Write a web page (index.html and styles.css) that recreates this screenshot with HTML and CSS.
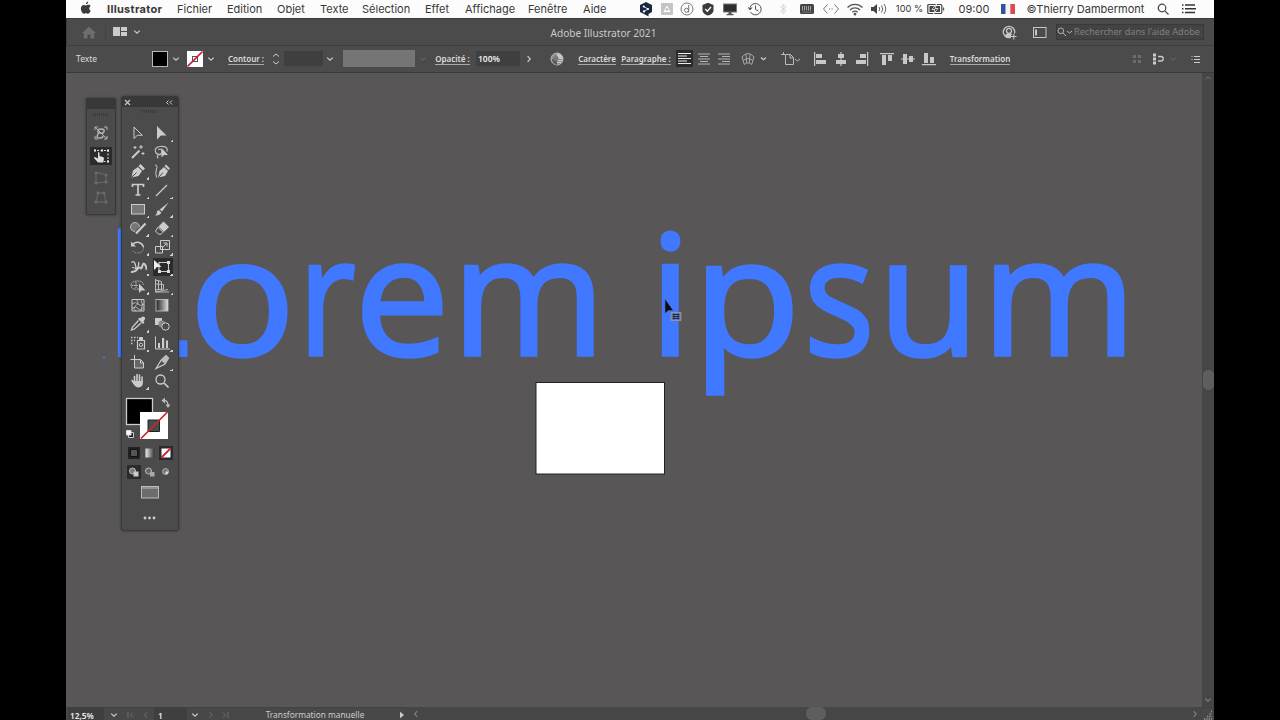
FILE: index.html
```html
<!DOCTYPE html>
<html lang="fr">
<head>
    <meta charset="UTF-8">
    <title>Adobe Illustrator 2021</title>
    <link rel="stylesheet" href="styles.css">
</head>
<body>

<!-- Shared icons -->
<svg class="defs" width="0" height="0">
    <symbol id="chev" viewBox="0 0 8 8"><path d="M1.2 2.6 4 5.2 6.8 2.6" fill="none" stroke="currentColor" stroke-width="1.2"/></symbol>
    <symbol id="right" viewBox="0 0 8 8"><path d="M2.6 1.2 5.2 4 2.6 6.8" fill="none" stroke="currentColor" stroke-width="1.2"/></symbol>
    <symbol id="left" viewBox="0 0 8 8"><path d="M5.2 1.2 2.6 4 5.2 6.8" fill="none" stroke="currentColor" stroke-width="1.2"/></symbol>
</svg>

<div class="screen">

    <!-- macOS menu bar -->
    <header class="menubar">
        <nav class="menus">
            <svg class="apple" width="12" height="14" viewBox="0 0 12 14"><path d="M8.2.6C8.2 2 7.200 3.300 5.900 3.300 5.800 2 7 .8 8.200.6zM10.700 9.700c-.6 1.500-1.600 3-2.700 3-.8 0-1-.5-2-.5s-1.300.5-2 .5C2.500 12.700.9 9.900.9 7.500c0-2.300 1.400-3.600 2.900-3.600.9 0 1.600.6 2.200.6s1.400-.7 2.500-.7c.9 0 1.700.5 2.200 1.200-2 1.200-1.700 4 .0 4.700z" fill="#3a3a3a"/></svg>
            <b>Illustrator</b><span>Fichier</span><span>Edition</span><span>Objet</span><span>Texte</span><span>Sélection</span><span>Effet</span><span>Affichage</span><span>Fenêtre</span><span>Aide</span>
        </nav>
        <div class="tray">
            <svg width="14" height="16" viewBox="0 0 14 16"><path d="M7 1 13 4v7L9.500 13v2.500L6 13.500 1 11V4z" fill="#17293e"/><path d="M4.500 5.500 9 8 5 10.500" stroke="#fff" fill="none" stroke-width=".8"/><circle cx="9" cy="8" r="1.100" fill="#fff"/><circle cx="4.800" cy="5.500" r="1.100" fill="#fff"/><circle cx="5" cy="10.400" r="1.100" fill="#fff"/></svg>
            <svg width="14" height="14" viewBox="0 0 14 14"><rect x="1" y="1" width="12" height="12" rx="1" fill="#c4c4c4"/><path d="M3.500 10 7 3.500l3.500 6.500z" fill="#fff"/><circle cx="7" cy="7.500" r="1.300" fill="#bbb"/></svg>
            <svg width="14" height="14" viewBox="0 0 14 14" fill="none" stroke="#777"><circle cx="7" cy="7" r="6"/><circle cx="6.500" cy="8.300" r="2" /><path d="M8.700 3v7.500"/></svg>
            <svg width="14" height="14" viewBox="0 0 14 14"><path d="M7 .8 12.500 3v5c0 3-2.500 4.600-5.500 5.500C4 12.600 1.500 11 1.500 8V3z" fill="#3b3b3b"/><path d="m4.300 7 2 2.200L10 5" stroke="#fff" fill="none" stroke-width="1.300"/></svg>
            <svg width="16" height="14" viewBox="0 0 16 14"><rect x="1.500" y="2" width="13" height="8" fill="#2e2e2e" stroke="#777"/><path d="M6.500 10h3v2h2v1.200h-7V12h2z" fill="#555"/></svg>
            <svg width="16" height="14" viewBox="0 0 16 14" fill="none" stroke="#555"><path d="M3.200 5A5.700 5.700 0 1 1 3.500 10"/><path d="M8.500 3.500V7.500l3 1.500"/><path d="M.8 5.500h4.800L3 8.500z" fill="#555" stroke="none"/></svg>
            <svg width="10" height="14" viewBox="0 0 10 14" fill="none" stroke="#d4d4d4"><path d="m2 4 6 5-3 3V2l3 3-6 5"/></svg>
            <svg width="16" height="14" viewBox="0 0 16 14"><rect x="1" y="2" width="14" height="10" rx="1.500" fill="#444"/><path d="M3.500 4v4.500M5.500 4v4.500M7.500 4v4.500M9.500 4v4.500M11.500 4v4.500" stroke="#bbb" stroke-width=".8"/><path d="M3 10.200h10" stroke="#888" stroke-width=".7"/></svg>
            <svg width="18" height="14" viewBox="0 0 18 14" fill="none" stroke="#777"><path d="M5.500 2.500 1.500 7l4 4.500M12.500 2.500l4 4.500-4 4.500M7 7h1.200M9.500 7h1.200"/></svg>
            <svg width="18" height="14" viewBox="0 0 18 14" fill="none" stroke="#555" stroke-width="1.300"><path d="M1.500 5.500a10.500 10.500 0 0 1 15 0M4 8a7 7 0 0 1 10 0M6.300 10.300a4 4 0 0 1 5.400 0"/><circle cx="9" cy="12.200" r=".7" fill="#555"/></svg>
            <svg width="18" height="14" viewBox="0 0 18 14" fill="none" stroke="#666"><path d="M1 5h2.500L7 2v10L3.500 9H1z" fill="#444" stroke="none"/><path d="M9 5q1.500 2 0 4M11.500 3.500q2.500 3.500 0 7M14 2q3.500 5 0 10"/></svg>
            <span class="percent">100 %</span>
            <svg width="18" height="14" viewBox="0 0 18 14"><rect x=".8" y="2.500" width="14" height="9" rx="1" fill="none" stroke="#444" stroke-width="1.200"/><rect x="2.500" y="4" width="10.500" height="6" fill="#444"/><path d="M9.500 2 5 7.500h3L6.500 12 11 6.500H8z" fill="#222" stroke="#fff" stroke-width=".8"/><path d="M16.500 5.500v3" stroke="#555" stroke-width="1.300"/></svg>
            <span class="clock">09:00</span>
            <svg width="14" height="10" viewBox="0 0 14 10"><path d="M0 0h4.700v10H0z" fill="#34519d"/><path d="M4.700 0h4.600v10H4.700z" fill="#f3f3f3"/><path d="M9.300 0H14v10H9.300z" fill="#dc4b50"/></svg>
            <span class="user">©Thierry Dambermont</span>
            <svg width="12" height="12" viewBox="0 0 12 12" fill="none" stroke="#444" stroke-width="1.200"><circle cx="5" cy="5" r="3.800"/><path d="m7.800 7.800 3.700 3.700"/></svg>
            <svg width="16" height="12" viewBox="0 0 16 12" stroke="#333" stroke-width="1.400"><path d="M4 2h10M4 5.700h11M4 9.500h10M1 2h1.500M1 5.700h1.500M1 9.500h1.500"/></svg>
        </div>
    </header>

    <!-- Application bar -->
    <div class="appbar">
        <div class="appbar-left">
            <svg width="14" height="13" viewBox="0 0 14 13"><path d="M7 .8 14 7h-1.800v5.500H8.500V8.500h-3v4H1.800V7H0z" fill="#6e6e6e"/></svg>
            <i class="sep"></i>
            <svg class="layout" width="14" height="9" viewBox="0 0 14 9" fill="#ccc"><path d="M0 0h7v9H0zM8 0h6v4H8zM8 5h6v4H8z"/></svg>
            <svg class="chev" width="8" height="8"><use href="#chev"/></svg>
        </div>
        <div class="app-title">Adobe Illustrator 2021</div>
        <div class="appbar-right">
            <svg width="15" height="15" viewBox="0 0 15 15"><circle cx="7" cy="7" r="5.700" fill="none" stroke="#c6c6c6" stroke-width="1.300"/><circle cx="7" cy="5.800" r="2.500" fill="none" stroke="#c6c6c6" stroke-width="1.300"/><path d="M3 11c0-2 2-2 2.500-3h3C9 9 11 9 11 11l-1.500 1.500h-5z" fill="#c6c6c6"/><path d="M9 11.500h6M12 8.500v6" stroke="#4b4b4b" stroke-width="3"/><path d="M9 11.500h5.500M11.800 9v5.500" stroke="#ccc"/></svg>
            <svg width="14" height="11" viewBox="0 0 14 11" fill="none" stroke="#c6c6c6"><rect x=".5" y=".5" width="12.500" height="10"/><path d="M3 2.500v6" stroke-width="2"/></svg>
            <div class="search">
                <svg width="16" height="10" viewBox="0 0 16 10" fill="none" stroke="#b5b5b5"><circle cx="3.800" cy="3.800" r="2.800"/><path d="m6 6 3 3M10 4l2.500 2L15 4"/></svg>
                <span>Rechercher dans l'aide Adobe</span>
            </div>
        </div>
    </div>

    <!-- Control bar -->
    <div class="control">
        <div class="control-grid">
            <span class="sel-type">Texte</span>
            <i class="swatch black"></i>
            <svg class="chev" width="8" height="8"><use href="#chev"/></svg>
            <svg class="no-stroke" width="16" height="16" viewBox="0 0 16 16"><path d="M0 0h16v16H0z" fill="#fff"/><rect x="5.500" y="5.500" width="5" height="5" fill="none" stroke="#555"/><path d="M.5 15.500 15.500.5" stroke="#d0213a" stroke-width="1.600"/></svg>
            <svg class="chev" width="8" height="8"><use href="#chev"/></svg>
            <a>Contour :</a>
            <svg width="8" height="14" viewBox="0 0 8 14" fill="none" stroke="#ccc"><path d="M1 4.500 4 2l3 2.500M1 9.500 4 12l3-2.500"/></svg>
            <i class="field stroke-w"></i>
            <svg class="chev" width="8" height="8"><use href="#chev"/></svg>
            <i class="profile"></i>
            <svg class="dim" width="8" height="8"><use href="#chev"/></svg>
            <a>Opacité :</a>
            <i class="field opacity">100%</i>
            <svg class="chev" width="8" height="8"><use href="#right"/></svg>
            <svg width="14" height="14" viewBox="0 0 14 14"><circle cx="7" cy="7" r="6" fill="#8f8f8f" stroke="#b8b8b8"/><path d="M7 1a6 6 0 0 1 6 6H7z" fill="#c6c6c6"/><path d="M2 7h5v6a6 6 0 0 1-5-6z" fill="#5c5c5c"/><path d="M7 8.500h5.500M7 10.500h4.500" stroke="#ccc" stroke-width=".9"/><circle cx="6" cy="6.500" r="2.500" fill="#777"/></svg>
            <a>Caractère</a>
            <a>Paragraphe :</a>
            <svg class="on" width="17" height="17" viewBox="0 0 17 17" stroke="#eee" stroke-width="1"><path d="M2 3.500h13M2 6h9M2 8.500h13M2 11h9M2 13.500h13"/></svg>
            <svg width="14" height="14" viewBox="0 0 14 14" stroke="#b5b5b5"><path d="M1 2h12M3 4.500h8M1 7h12M3 9.500h8M1 12h12"/></svg>
            <svg width="14" height="14" viewBox="0 0 14 14" stroke="#b5b5b5"><path d="M1 2h12M5 4.500h8M1 7h12M5 9.500h8M1 12h12"/></svg>
            <svg width="28" height="14" viewBox="0 0 28 14" fill="none" stroke="#aaa"><path d="M1 5q6-7 12 0l-2.300 7.500L8.500 11h-3l-2.200 1.500zM5 2.200 5.700 11M9 2.200 8.300 11M2.300 8q4.700-3 9.400 0"/><path d="m20 5.500 2.500 2.300L25 5.500" stroke="#ccc" stroke-width="1.200"/></svg>
            <svg width="20" height="14" viewBox="0 0 20 14" fill="none" stroke="#bbb"><path d="M4.500 12.500v-10h5l3 3v7zM0 2.500h4M2.500 0v3M9 2.500V6h3.500"/><path d="m14 7 2.300 2L19 7"/></svg>
            <svg width="14" height="14" viewBox="0 0 14 14" fill="#c8c8c8"><path d="M1 0h1.200v14H1zM3 2h6v4H3zM3 8h10v4H3z"/></svg>
            <svg width="14" height="14" viewBox="0 0 14 14" fill="#c8c8c8"><path d="M6.400 0h1.200v14H6.400zM4 2h6v4H4zM2 8h10v4H2z"/></svg>
            <svg width="14" height="14" viewBox="0 0 14 14" fill="#c8c8c8"><path d="M12 0h1.200v14H12zM5 2h6v4H5zM1 8h10v4H1z"/></svg>
            <svg width="14" height="14" viewBox="0 0 14 14" fill="#c8c8c8"><path d="M0 1h14v1.200H0zM2 3h4v10H2zM8 3h4v6H8z"/></svg>
            <svg width="14" height="14" viewBox="0 0 14 14" fill="#c8c8c8"><path d="M0 6.400h14v1.200H0zM2 2h4v10H2zM8 4h4v6H8z"/></svg>
            <svg width="14" height="14" viewBox="0 0 14 14" fill="#c8c8c8"><path d="M0 12h14v1.200H0zM2 1h4v10H2zM8 5h4v6H8z"/></svg>
            <a>Transformation</a>
        </div>
        <div class="control-end">
            <svg width="14" height="14" viewBox="0 0 14 14" fill="#6c6c6c"><path d="M3 3h3v3H3zM8 3h3v3H8zM3 8h3v3H3zM8 8h3v3H8z"/></svg>
            <svg width="14" height="14" viewBox="0 0 14 14"><path d="M2 1.500h3v3H2zM2 5.500h3v3H2zM2 9.500h3v3H2z" fill="#ccc"/><path d="M7 4.500h3a2.200 2.200 0 0 1 0 4.500H7" fill="none" stroke="#ccc" stroke-width="1.300"/></svg>
            <svg class="dim" width="8" height="8"><use href="#chev"/></svg>
            <svg width="10" height="10" viewBox="0 0 10 10" stroke="#ccc"><path d="M3 2.500h6M3 5.500h6M3 8.500h6M.5 2.500h1M.5 5.500h1"/></svg>
        </div>
    </div>

    <!-- Document -->
    <main class="workspace">
        <svg class="art" width="1136" height="634" viewBox="66 73 1136 634">
            <g class="lorem">
                <text transform="translate(103.500 355.300) scale(1 1.050)">L</text>
                <text transform="translate(189.600 355.300) scale(1.065 1)">o</text>
                <text transform="translate(298.300 355.300) scale(.850 1)">r</text>
                <text transform="translate(354.500 355.300) scale(1.025 1)">e</text>
                <text transform="translate(451.800 355.300) scale(1.005 1)">m</text>
                <text transform="translate(649.600 355.300) scale(1 1.015)">i</text>
                <text transform="translate(693 355.300) scale(1.065 .990)">p</text>
                <text transform="translate(804 355.300) scale(.895 1)">s</text>
                <text transform="translate(878 355.300)">u</text>
                <text transform="translate(981.800 355.300) scale(1.010 1)">m</text>
            </g>
            <circle cx="104" cy="357.500" r="1.300" fill="#4a6fd0"/>
            <rect x="536" y="382.500" width="128.500" height="91.500" fill="#fff" stroke="#222" stroke-width="1"/>
            <path d="M665 299v14.500l3.300-3h5z" fill="#0a0a18" stroke="#5c6ca0" stroke-width=".6"/>
            <path d="M671 312.500h10v8h-10z" fill="#6f82b4" stroke="#9a9a9a" stroke-width=".8"/>
            <path d="M672.500 314.500h7M672.500 318.500h7M674 313.500v6M678 313.500v6M672.500 316.500h7" stroke="#10183a" stroke-width=".8"/>
        </svg>
        <div class="vscroll">
            <svg width="8" height="8" viewBox="0 0 8 8"><path d="M1.500 5 4 2.800 6.500 5" fill="none" stroke="#777"/></svg>
            <i class="thumb"></i>
            <svg class="grey" width="8" height="8"><use href="#chev"/></svg>
        </div>

        <!-- Free transform widget -->
        <div class="widget">
            <div class="widget-head"></div>
            <div class="grip"></div>
            <svg width="22" height="18" viewBox="0 0 22 18" fill="none" stroke="#b5b5b5"><path d="M5 6V3h3M14 3h3v3M17 12v3h-3M8 15H5v-3M5 3l12 12"/><path d="M8 8.500q-1-3.500 3-3.500t3 2.500-3 1.500-3 1-1 3 3 1 3-2" stroke-width="1.400"/></svg>
            <svg class="on" width="22" height="18" viewBox="0 0 22 18"><path d="M7 3.500h11v11h-6" fill="none" stroke="#ddd" stroke-dasharray="2 1.500"/><path d="M4 2.500h2v2H4zM11 2.500h2v2h-2zM17 2.500h2v2h-2zM17 13.500h2v2h-2z" fill="#eee"/><path d="M8 5.500q1-1 1.500.5v3l4 1.300q1 1-.5 5.200H8L4 11q0-1.500 2-.5l2 1z" fill="#ddd"/></svg>
            <svg width="22" height="20" viewBox="0 0 22 20" fill="none" stroke="#6b6b6b"><path d="M6 5h4l6 2v7l-10 1z"/><path d="M5 4h2v2H5zM15 6h2v2h-2zM15 13h2v2h-2zM5 14h2v2H5z" fill="#6b6b6b"/></svg>
            <svg width="22" height="20" viewBox="0 0 22 20" fill="none" stroke="#6b6b6b"><path d="M8 5h6l2 9H6z"/><path d="M7 4h2v2H7zM13 4h2v2h-2zM15 13h2v2h-2zM5 13h2v2H5z" fill="#6b6b6b"/></svg>
        </div>

        <!-- Tools panel -->
        <div class="tools">
            <div class="tools-head">
                <svg width="7" height="7" viewBox="0 0 7 7"><path d="m1 1 5 5M6 1 1 6" stroke="#ccc" stroke-width="1.100"/></svg>
                <svg width="8" height="7" viewBox="0 0 8 7"><path d="M3.500 1.500 1.500 3.500l2 2M7 1.500 5 3.500l2 2" fill="none" stroke="#ccc"/></svg>
            </div>
            <div class="grip"></div>
            <div class="tool-grid">
                <svg viewBox="0 0 18 18"><path d="M5 3v11.500l3.300-3.200h5z" fill="none" stroke="#ccc"/></svg>
                <svg class="more" viewBox="0 0 18 18"><path d="M4 2v13.500l4-4h5.500z" fill="#ccc"/></svg>
                <svg viewBox="0 0 18 18"><path d="m3 15 7.500-7.500" stroke="#ccc" stroke-width="2"/><path d="M12 2v4M10 4h4M6 3v3M4.500 4.500h3M14 9v3M12.500 10.500h3" stroke="#ccc"/></svg>
                <svg viewBox="0 0 18 18"><path d="M8 11.500C1 12 0 4 7 3.500s8 2 7 5M5 6.500q4-1 4 2t-4 3q-1 2 0 4" fill="none" stroke="#bbb" stroke-width="1.200"/><path d="M8.500 5v9.500l2.500-2.500h4z" fill="#ccc"/></svg>
                <svg class="more" viewBox="0 0 18 18"><path d="M2.500 15.500 4 8.500 9 5l4 4-3.500 5z" fill="#ccc"/><path d="m9.500 4 2-2L16 6.500l-2 2z" fill="#ccc"/><path d="m3 15 4.500-4.500" stroke="#4b4b4b"/></svg>
                <svg viewBox="0 0 18 18"><path d="M5 15.500 6.500 9l4.500-4 4 4-3 5z" fill="#ccc"/><path d="m11.500 4 1.500-1.500L17 6.500 15.500 8z" fill="#ccc"/><path d="m6 15 4-4.500" stroke="#4b4b4b"/><path d="M2 3q3 0 1.500 4t0 8.500" fill="none" stroke="#ccc"/></svg>
                <svg class="more" viewBox="0 0 18 18"><path d="M3.500 6V3.500h11V6M9 3.500V14M6.500 14h5" fill="none" stroke="#ccc" stroke-width="1.700"/></svg>
                <svg class="more" viewBox="0 0 18 18"><path d="M3 15 14 4" stroke="#ccc" stroke-width="1.200"/></svg>
                <svg class="more" viewBox="0 0 18 18"><rect x="2.500" y="4.500" width="13" height="9.500" fill="#777" stroke="#ccc"/></svg>
                <svg class="more" viewBox="0 0 18 18"><path d="M15.500 2.500 9 11.500 6.800 9.500z" fill="#ccc"/><path d="M6 10.300 8.300 12.500Q7 16 2 15.500 4 14 4 12t2-1.700z" fill="#ccc"/></svg>
                <svg class="more" viewBox="0 0 18 18"><circle cx="6" cy="8" r="4.500" fill="#777" stroke="#bbb"/><path d="m7 14.500 9.500-10" stroke="#4b4b4b" stroke-width="4"/><path d="m7 14.500 9.500-10" stroke="#ccc" stroke-width="2.200"/></svg>
                <svg class="more" viewBox="0 0 18 18"><path d="M10.500 2.500 16 8l-5 5-5.500-5.500z" fill="#ccc"/><path d="m5 8.200 5 5-2 2H5.500l-3-3z" fill="none" stroke="#ccc"/></svg>
                <svg class="more" viewBox="0 0 18 18"><path d="M3.500 6.500q3-3 6.500-2t4.500 4.500" fill="none" stroke="#ccc" stroke-width="1.500"/><path d="M14.500 9q0 6-6 6-3.500 0-5-3" fill="none" stroke="#aaa" stroke-dasharray="1.200 1"/><path d="M2 3.500v5h5z" fill="#ccc"/></svg>
                <svg class="more" viewBox="0 0 18 18" fill="none" stroke="#ccc"><path d="M7.500 2.500h9v9h-9zM2.500 8.500h7v6.500h-7z"/><path d="m9 10 4.500-4.500M10.500 5h3.500v3.500"/></svg>
                <svg class="more" viewBox="0 0 18 18" fill="none" stroke="#ccc"><path d="M2.500 4.500q2.500-2 3.500 1t1 5.500M9.500 4q1 4-2.500 7" stroke-width="1.300"/><path d="M2 14q3.500.5 6-2.500t3.500-1.500 2-2.500 3 0 0 3" stroke-width="2"/><path d="M3 9.500q3 0 5 2"/></svg>
                <svg class="more on" viewBox="0 0 18 18"><path d="M6 4.500h9.500v9H6z" fill="none" stroke="#ccc" stroke-width="1.100"/><path d="M14 3h3v3h-3zM14 12h3v3h-3zM5 12h3v3H5z" fill="#ddd"/><path d="M1 2v10l3-3h4.500z" fill="#eee"/></svg>
                <svg class="more" viewBox="0 0 18 18"><path d="M10 12Q2 13 2 8.500T9 4q5 0 5.500 4M2.500 8.500h7M7 5v6" fill="none" stroke="#bbb" stroke-dasharray="1.700 .6"/><path d="M10 6.500V16l2.500-2.500h4z" fill="#ccc"/></svg>
                <svg class="more" viewBox="0 0 18 18" fill="none" stroke="#bbb"><path d="M2.500 2v13H16M2.500 3l6 1.500V13M2.500 7l8 .5V12l-8 1M5.500 3.500V13M2.500 15 15 12.500"/></svg>
                <svg viewBox="0 0 18 18" fill="none" stroke="#ccc"><path d="M3 3.500h12v11.500H3z"/><path d="M3 8q4-3 6 0t6 0M3 12.500q4-3 6 0t6-1M7 3.500q4 3 0 6t0 5.500M12 3.500q3 5 0 11.500" stroke-width=".8"/></svg>
                <svg viewBox="0 0 18 18"><defs><linearGradient id="gr"><stop offset="0" stop-color="#222"/><stop offset="1" stop-color="#ddd"/></linearGradient></defs><rect x="3" y="3.500" width="12" height="11.500" fill="url(#gr)" stroke="#ccc" stroke-width=".8"/></svg>
                <svg class="more" viewBox="0 0 18 18"><path d="M11 3.500q3-3 4.500-1.500T14.500 6.500l1 1L14 9 9 4l1.500-1.500z" fill="#ccc"/><path d="M9.500 5.500 3.500 12 2.500 15l3-1 6.500-6" fill="none" stroke="#ccc" stroke-width="1.300"/></svg>
                <svg viewBox="0 0 18 18"><path d="M2 3h7v7H2z" fill="#ccc"/><circle cx="9" cy="9" r="3.500" fill="#888"/><circle cx="12.500" cy="11.500" r="3.700" fill="#4b4b4b" stroke="#ccc"/></svg>
                <svg class="more" viewBox="0 0 18 18" fill="none" stroke="#ccc"><path d="M8.500 6.500h7v8.500h-7z" stroke-width="1.200"/><path d="M10.500 3.500h3v3h-3z" fill="#ccc"/><circle cx="12" cy="10.800" r="1.700"/><path d="M2 3.500h7M2 6.500h4M2 9.500h3" stroke-dasharray="1.500 1.500" stroke-width="1.300"/></svg>
                <svg class="more" viewBox="0 0 18 18"><path d="M2.500 2.500V15H17" fill="none" stroke="#ccc"/><path d="M5 9h2v5H5zM9 4h2.200v10H9zM13 6.500h2v7.500h-2z" fill="#ccc"/></svg>
                <svg viewBox="0 0 18 18"><path d="M5.500 6.500v8.500h9V9.500l-3-3z" fill="#666"/><path d="M5.500 2v4M1.500 6.500h10M5.500 6.500v8.500h9V9.500l-3-3V10h3" fill="none" stroke="#ccc"/></svg>
                <svg class="more" viewBox="0 0 18 18"><path d="M3 15.500 8 7.500l5-5 2.500 2.500-3.500 6z" fill="none" stroke="#ccc" stroke-width="1.200"/><path d="m8 7.500 4 3.500 3.500-6L13 2.500z" fill="#bbb"/></svg>
                <svg class="more" viewBox="0 0 18 18"><path d="M5.500 10V4.500M8 9V2.500M10.500 9V3M13 10V5M3 8.500l3 4" stroke="#ccc" stroke-width="1.600" stroke-linecap="round"/><path d="M4.700 9h9.200q.5 6-4.500 6.500Q6 15.500 3.500 10z" fill="#ccc"/></svg>
                <svg viewBox="0 0 18 18" fill="none" stroke="#ccc"><circle cx="7.500" cy="7.500" r="4.500" stroke-width="1.300"/><path d="m11 11 4.500 4.500" stroke-width="1.700"/></svg>
            </div>
            <svg class="fillstroke" width="50" height="46" viewBox="0 0 50 46">
                <rect x="2.500" y="2.500" width="26" height="26" fill="#000" stroke="#ccc" stroke-width="1.300"/>
                <path d="M16 16h28v27H16z" fill="#fff"/><path d="M24 24h11.500v11.500H24z" fill="#4b4b4b" stroke="#222"/><path d="M17 42.500 43.500 16" stroke="#c9252d" stroke-width="1.700"/>
                <path d="M39 4.500q5-.5 5 5" fill="none" stroke="#bbb" stroke-width="1.300"/><path d="m41 1.500-3.500 3L41 7.500zM41.500 8.500h5L44 12z" fill="#bbb"/>
                <path d="M4.500 36.500h5v5h-5z" fill="#222" stroke="#ccc"/><path d="M2.500 34.500h4.500v4.500H2.500z" fill="#fff" stroke="#ddd"/>
            </svg>
            <div class="modes">
                <svg viewBox="0 0 14 14"><path d="M1 1h12v12H1z" fill="#222"/><path d="M3.500 3.500h7v7h-7z" fill="#555" stroke="#111"/></svg>
                <svg viewBox="0 0 14 14"><path d="M2.500 2.500h9v9h-9z" fill="url(#gr2)"/><defs><linearGradient id="gr2"><stop offset="0" stop-color="#eee"/><stop offset="1" stop-color="#333"/></linearGradient></defs></svg>
                <svg class="on" viewBox="0 0 14 14"><path d="M2.500 2.500h9v9h-9z" fill="#fff"/><path d="m2.500 11.500 9-9" stroke="#d0213a" stroke-width="1.800"/></svg>
                <svg class="on" viewBox="0 0 14 14"><circle cx="5.500" cy="6" r="3" fill="#777" stroke="#bbb"/><path d="M6.500 6.500h5v5h-5z" fill="#ccc"/></svg>
                <svg viewBox="0 0 14 14"><path d="M7 7h4.500v4.500H7z" fill="#aaa"/><circle cx="5.500" cy="6" r="3" fill="#666" stroke="#bbb"/></svg>
                <svg viewBox="0 0 14 14"><circle cx="6.500" cy="6.500" r="3" fill="#777" stroke="#aaa"/><path d="M6.500 6.500h3a3 3 0 0 1-3 3z" fill="#ddd"/></svg>
            </div>
            <svg class="screenmode" width="18" height="13" viewBox="0 0 18 13"><rect x=".5" y=".5" width="17" height="11.500" fill="#6c6c6c" stroke="#bbb"/><path d="M1 2h16" stroke="#bbb"/></svg>
            <svg class="dots" width="13" height="4" viewBox="0 0 13 4" fill="#ccc"><circle cx="2" cy="2" r="1.400"/><circle cx="6.500" cy="2" r="1.400"/><circle cx="11" cy="2" r="1.400"/></svg>
        </div>
    </main>

    <!-- Status bar -->
    <footer class="status">
        <i class="field">12,5%</i>
        <svg class="chev" width="8" height="8"><use href="#chev"/></svg>
        <svg width="8" height="8" viewBox="0 0 8 8"><path d="M1 1v6M6 1.500 3.500 4 6 6.500" fill="none" stroke="#6c6c6c"/></svg>
        <svg class="dim" width="8" height="8"><use href="#left"/></svg>
        <i class="field page">1</i>
        <svg class="chev" width="8" height="8"><use href="#chev"/></svg>
        <svg class="dim" width="8" height="8"><use href="#right"/></svg>
        <svg width="8" height="8" viewBox="0 0 8 8"><path d="M7 1v6M2 1.500 4.500 4 2 6.500" fill="none" stroke="#6c6c6c"/></svg>
        <span>Transformation manuelle</span>
        <svg width="6" height="8" viewBox="0 0 6 8"><path d="M1 .8v6.400L5 4z" fill="#ccc"/></svg>
        <div class="hscroll">
            <svg class="grey" width="8" height="8"><use href="#left"/></svg>
            <i class="thumb"></i>
            <svg class="grey" width="8" height="8"><use href="#right"/></svg>
        </div>
        <svg width="10" height="10" viewBox="0 0 10 10"><path d="M1 9h8M4 6.500h5M6.500 4H9M8 1.500h1" stroke="#999" stroke-width="1.300" stroke-dasharray="1.300 1"/></svg>
    </footer>
</div>

</body>
</html>
```
FILE: styles.css
```css
* {
    box-sizing: border-box;
}
body {
    margin: 0;
    background: #000;
    overflow: hidden;
    font-family: "Noto Sans", "Open Sans", sans-serif;
}
i {
    font-style: normal;
}
svg {
    flex: none;
    display: block;
}
.defs {
    position: absolute;
}
.screen {
    width: 1148px;
    height: 720px;
    margin: 0 auto;
    display: flex;
    flex-direction: column;
    background: #4b4b4b;
}
.chev {
    color: #ccc;
}
.dim {
    color: #616161;
}
.grey {
    color: #7d7d7d;
}
.on {
    background: #2b2b2b;
}

/* macOS menu bar */
.menubar {
    height: 18px;
    display: flex;
    justify-content: space-between;
    background: #fcfcfc;
    font-family: Inter, sans-serif;
    font-size: 11px;
    line-height: 18px;
    color: #383838;
    white-space: nowrap;
}
.menus {
    display: grid;
    grid-template-columns: 27px 70px 50px 50px 43px 42px 63px 40px 63px 55px 30px;
    padding-left: 14px;
}
.menus b {
    letter-spacing: 0.3px;
}
.apple {
    margin-top: 1px;
}
.tray {
    display: grid;
    grid-template-columns: 20px 22px 18px 24px 20px 30px 26px 22px 26px 22px 26px 35px 18px 58px 9px 147px 8px 44px;
    align-items: center;
    justify-items: center;
    padding-right: 3px;
}
.percent {
    font-size: 9.3px;
}

/* Application bar */
.appbar {
    height: 28px;
    display: flex;
    align-items: center;
    padding-top: 1px;
    border-top: 1px solid #3a3a3a;
    border-bottom: 1px solid #3e3e3e;
    border-left: 1px solid #3c3c3c;
    color: #cacaca;
    font-size: 10.1px;
    white-space: nowrap;
}
.appbar-left {
    width: 483.5px;
    display: flex;
    align-items: center;
    padding-left: 15px;
}
.sep {
    width: 1px;
    height: 16px;
    margin: 0 7px 0 9px;
    background: #424242;
}
.layout,
.appbar-left .chev {
    margin-bottom: 2px;
}
.appbar-left .chev {
    margin-left: 6px;
}
.appbar-right {
    margin-left: auto;
    padding-right: 10px;
    display: flex;
    align-items: center;
}
.appbar-right > svg + svg {
    margin: 0 9px 0 16px;
}
.search {
    width: 148px;
    height: 16px;
    display: flex;
    align-items: center;
    gap: 1px;
    margin-bottom: 2px;
    border: 1px solid #393939;
    background: #434343;
    color: #808080;
    font-size: 9.1px;
}

/* Control bar */
.control {
    height: 27px;
    display: flex;
    justify-content: space-between;
    padding: 0 13px 1px 10px;
    border-bottom: 1px solid #3a3a3a;
    color: #dcdcdc;
    font-size: 8.5px;
    white-space: nowrap;
}
.control-grid {
    display: grid;
    grid-template-columns: 76px 16px 16px 19px 16px 54px 6px 44px 14px 78px 16px 43px 48px 14px 42px 38px 60px 17px 22px 18px 44px 28px 30px 12px 30px 20px 22px 20px 82px;
    align-items: center;
    justify-items: center;
}
.control a {
    font-size: 8px;
    font-weight: 600;
    line-height: 10px;
    padding-top: 1px;
    border-bottom: 1px solid #aaa;
}
.sel-type {
    justify-self: start;
}
.swatch {
    width: 16px;
    height: 16px;
    background: #000;
    border: 1px solid #bbb;
}
.no-stroke {
    justify-self: end;
}
.field {
    height: 15px;
    background: #3f3f3f;
    color: #eee;
    font-weight: 600;
    line-height: 15px;
}
.stroke-w {
    width: 39px;
    justify-self: end;
}
.opacity {
    width: 44px;
    padding-left: 2px;
}
.profile {
    width: 72px;
    height: 17px;
    justify-self: end;
    background: #757575;
}
.control-end {
    display: flex;
    align-items: center;
}
.control-end svg:nth-child(2) {
    margin: 0 4px 0 7px;
}
.control-end svg:last-child {
    margin-left: 14px;
}

/* Document */
.workspace {
    position: relative;
    height: 634px;
    display: flex;
    background: #585656;
}
.lorem {
    font-family: "Open Sans", sans-serif;
    font-size: 165px;
    fill: #4078ff;
    stroke: #4078ff;
    stroke-width: 3.6px;
}
.vscroll {
    width: 12px;
    display: flex;
    flex-direction: column;
    align-items: center;
    padding: 1px 0 3px;
    background: #464646;
}
.vscroll .thumb {
    width: 11px;
    height: 20px;
    margin: 288px 0 auto;
    border-radius: 5px;
    background: #5e5e5e;
}

/* Floating panels */
.widget,
.tools {
    position: absolute;
    background: #4b4b4b;
    border: 1px solid #393939;
    box-shadow: 0 0 3px rgba(0,0,0,0.4);
}
.widget {
    left: 20px;
    top: 25px;
    width: 30px;
    height: 117px;
    display: flex;
    flex-direction: column;
    align-items: center;
}
.widget-head {
    width: 100%;
    height: 10px;
    background: #383838;
}
.grip {
    width: 16px;
    height: 3px;
    margin: 4px auto 0;
    background: repeating-linear-gradient(90deg, #3a3a3a 0 1px, transparent 1px 2px);
}
.widget .grip {
    margin-bottom: 8px;
}
.widget .on {
    margin: 5px 0 3px;
}
.tools {
    left: 55px;
    top: 23px;
    width: 58px;
    height: 435px;
    border-radius: 3px;
}
.tools-head {
    height: 10px;
    display: flex;
    align-items: center;
    justify-content: space-between;
    padding: 0 5px 0 2px;
    background: #383838;
}
.tools .grip {
    margin-top: 3px;
}
.tool-grid {
    display: grid;
    grid-template-columns: 24.5px 24.5px;
    grid-auto-rows: 19.15px;
    justify-content: center;
    justify-items: center;
    align-items: center;
    margin-top: 10px;
}
.tool-grid svg {
    width: 18px;
    height: 18px;
}
.tool-grid .more {
    width: 20px;
    padding-right: 2px;
    margin-right: -2px;
    background-image: linear-gradient(135deg, transparent 50%, #ccc 50%);
    background-size: 3px 3px;
    background-position: right bottom;
    background-repeat: no-repeat;
}
.fillstroke {
    margin: 5px 0 0 2px;
}
.modes {
    display: grid;
    grid-template-columns: repeat(3, 16px);
    grid-auto-rows: 19px;
    justify-content: center;
    justify-items: center;
    align-items: center;
    margin: 2px 1px 0 0;
}
.modes svg {
    width: 14px;
    height: 14px;
}
.screenmode {
    margin: 4px auto 0 19px;
}
.dots {
    margin: 17px auto 0 21px;
}

/* Status bar */
.status {
    height: 13px;
    display: grid;
    grid-template-columns: 36px 20px 14px 16px 33px 15px 18px 10px 170px 4px 1fr 12px;
    grid-template-rows: 13px;
    align-items: center;
    justify-items: center;
    padding-left: 2px;
    background: #484848;
    box-shadow: inset 0 1px #424242;
    color: #ccc;
    font-size: 8.3px;
    line-height: 13px;
    white-space: nowrap;
}
.status > svg,
.status > span {
    margin-top: 2px;
}
.status .field {
    width: 100%;
    height: 13px;
    padding: 1px 0 0 2px;
}
.status .page {
    padding-left: 4px;
}
.hscroll {
    width: 100%;
    height: 13px;
    display: flex;
    align-items: center;
    padding: 0 3px 0 8px;
    background: #464646;
}
.hscroll .thumb {
    width: 20px;
    height: 13px;
    margin: 0 auto 0 386px;
    border-radius: 6px;
    background: #5e5e5e;
}
```
